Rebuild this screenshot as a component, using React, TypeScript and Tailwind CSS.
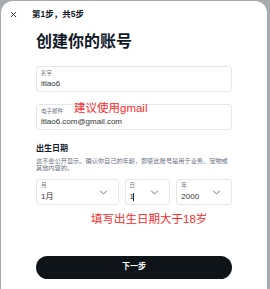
import React from "react";

const font = { fontFamily: '"Liberation Sans", "Noto Sans CJK SC", sans-serif' };

function Chevron() {
  return (
    <svg className="w-[9px] h-[9px] text-gray-600" viewBox="0 0 24 24" fill="none" stroke="currentColor" strokeWidth={2.2}>
      <path d="M4 8l8 8 8-8" strokeLinecap="round" strokeLinejoin="round" />
    </svg>
  );
}

function DateBox({ label, value, width, caret }: { label: string; value: string; width: string; caret?: boolean }) {
  return (
    <div className={`${width} h-[26px] border border-gray-200 rounded-[3px] flex items-center justify-between pl-[4px] pr-[10px]`}>
      <div className="flex flex-col leading-none">
        <span className="text-[5.5px] text-gray-500">{label}</span>
        <span className="text-[8px] text-[#333] font-normal mt-[4px] flex items-center">
          {value}
          {caret && <span className="w-px h-[8px] bg-gray-800 ml-[-1px]"></span>}
        </span>
      </div>
      <Chevron />
    </div>
  );
}

export default function App() {
  return (
    <div className="w-[270px] h-[289px] bg-[#a7abb0] pt-px pl-px pr-[3px] overflow-hidden" style={font}>
      <div className="bg-white w-full h-[300px] rounded-[12px] flex flex-col">
        {/* 顶部 */}
        <div className="flex items-center h-[24px] pl-[9px] pt-[2px]">
          <svg className="w-[7px] h-[7px] text-gray-800" viewBox="0 0 24 24" fill="none" stroke="currentColor" strokeWidth={3}>
            <path d="M4 4l16 16M20 4L4 20" strokeLinecap="round" />
          </svg>
          <span className="ml-[15px] text-[8.5px] font-bold text-gray-900">第1步，共5步</span>
        </div>

        <div className="px-[35px]">
          <h1 className="text-[16px] font-bold text-gray-900 mt-[9px] leading-none">创建你的账号</h1>

          {/* 名字 */}
          <div className="mt-[16px] h-[26px] border border-gray-200 rounded-[3px] pl-[4px] pt-[4px] flex flex-col leading-none">
            <span className="text-[5.5px] text-gray-500">名字</span>
            <span className="text-[8px] text-[#333] mt-[3px]">itlao6</span>
          </div>

          {/* 电子邮件 */}
          <div className="mt-[12px] h-[26px] border border-gray-200 rounded-[3px] pl-[4px] pt-[4px] flex flex-col leading-none relative">
            <span className="text-[5.5px] text-gray-500">电子邮件</span>
            <span className="text-[8px] text-[#333] mt-[3px]">itlao6.com@gmail.com</span>
            <span className="absolute left-[37px] top-[-2px] text-[11.5px] text-[#ff2a2a] leading-none">建议使用gmail</span>
          </div>

          {/* 出生日期 */}
          <div className="mt-[15px] text-[8px] font-bold text-gray-900 leading-none">出生日期</div>
          <p className="mt-[4px] text-[6.2px] text-gray-500 leading-[7px]">
            这不会公开显示。确认你自己的年龄，即使此账号是用于业务、宠物或其他内容的。
          </p>

          <div className="mt-[8px] flex gap-[6px]">
            <DateBox label="月" value="1月" width="w-[83px]" />
            <DateBox label="日" value="1" width="w-[46px]" caret />
            <DateBox label="年" value="2000" width="w-[56px]" />
          </div>

          <div className="mt-[9px] pl-[55px] text-[11.5px] text-[#ff2a2a] leading-none">填写出生日期大于18岁</div>

          <button className="mt-[30px] w-full h-[23px] rounded-full bg-[#0f1419] text-white text-[8px] font-bold">
            下一步
          </button>
        </div>
      </div>
    </div>
  );
}
